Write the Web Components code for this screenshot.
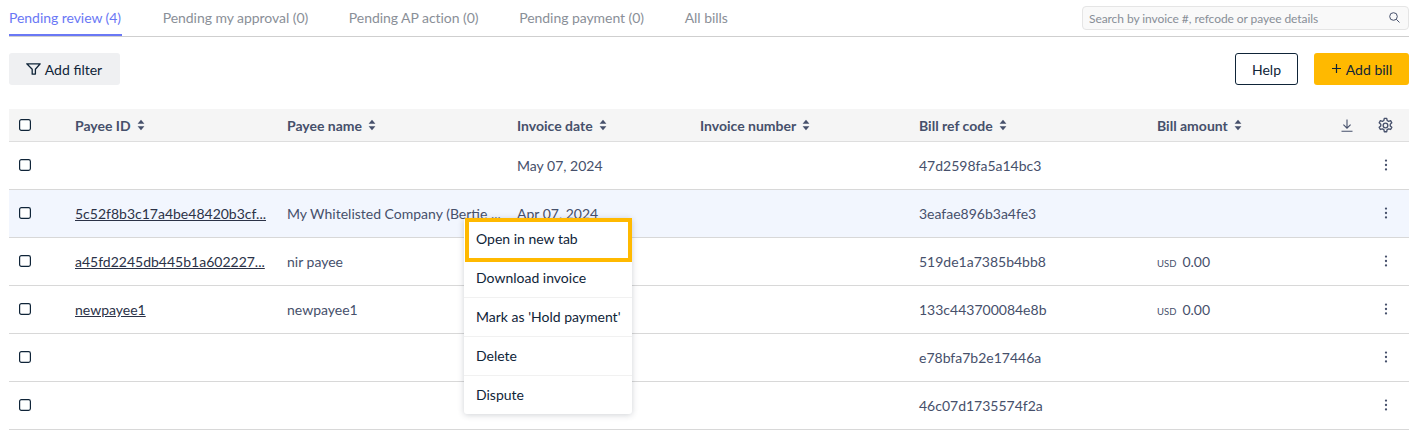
<!DOCTYPE html>
<html lang="en"><head><meta charset="utf-8"><title>Bills</title>
<style>
html,body{margin:0;padding:0;background:#fff}
body{font-family:Lato,"Liberation Sans",sans-serif;font-size:14px;color:#46506b;width:1424px;height:436px;overflow:hidden}
</style></head><body>
<bills-page>
  <bills-tabs slot="tabs">
    <tab-item active>Pending review (4)</tab-item>
    <tab-item>Pending my approval (0)</tab-item>
    <tab-item>Pending AP action (0)</tab-item>
    <tab-item>Pending payment (0)</tab-item>
    <tab-item>All bills</tab-item>
    <search-box slot="end" placeholder="Search by invoice #, refcode or payee details"></search-box>
  </bills-tabs>
  <bills-toolbar slot="toolbar">
    <app-button kind="soft" icon="filter">Add filter</app-button>
    <app-button slot="end" kind="outline">Help</app-button>
    <app-button slot="end" kind="primary" icon="plus">Add bill</app-button>
  </bills-toolbar>
  <bills-table slot="table">
    <header-row></header-row>
    <bill-row date="May 07, 2024" ref="47d2598fa5a14bc3"></bill-row>
    <bill-row hl payee="5c52f8b3c17a4be48420b3cf..." name="My Whitelisted Company (Bertie ..." date="Apr 07, 2024" ref="3eafae896b3a4fe3"></bill-row>
    <bill-row payee="a45fd2245db445b1a602227..." name="nir payee" ref="519de1a7385b4bb8" amount="0.00"></bill-row>
    <bill-row payee="newpayee1" name="newpayee1" ref="133c443700084e8b" amount="0.00"></bill-row>
    <bill-row ref="e78bfa7b2e17446a"></bill-row>
    <bill-row ref="46c07d1735574f2a"></bill-row>
  </bills-table>
  <action-menu slot="overlay">
    <menu-item focused>Open in new tab</menu-item>
    <menu-item>Download invoice</menu-item>
    <menu-item>Mark as 'Hold payment'</menu-item>
    <menu-item>Delete</menu-item>
    <menu-item last>Dispute</menu-item>
  </action-menu>
</bills-page>
<script>
const GRID='grid-template-columns:66px 212px 230px 183px 219px 238px 1fr 22px 46px;';
function def(name,html){
  customElements.define(name,class extends HTMLElement{
    connectedCallback(){
      if(this.shadowRoot)return;
      const r=this.attachShadow({mode:'open'});
      r.innerHTML=typeof html==='function'?html(this):html;
    }
  });
}
const attr=(e,n)=>{const v=e.getAttribute(n);return v==null?'':v};
const CHECK=`<svg width="12" height="12" viewBox="0 0 12 12" style="display:block"><rect x=".6" y=".6" width="10.8" height="10.8" rx="1.8" fill="#fff" stroke="#0f2438" stroke-width="1.2"/></svg>`;
const SORT=`<svg width="8" height="12" viewBox="0 0 8 12" style="display:block"><path d="M4 .8 7.4 4.800H.6z M4 11.200 .6 7.200h6.800z" fill="#46506b"/></svg>`;
const KEBAB=`<svg width="4" height="12" viewBox="0 0 4 12" style="display:block"><circle cx="2" cy="1.600" r="1.150" fill="#46506b"/><circle cx="2" cy="6" r="1.150" fill="#46506b"/><circle cx="2" cy="10.400" r="1.150" fill="#46506b"/></svg>`;

def('bills-page',`<style>:host{display:block;position:relative;width:1400px;padding:0 15px 0 9px;height:436px}
.ov{position:absolute;left:464px;top:218px}</style>
<slot name="tabs"></slot><slot name="toolbar"></slot><slot name="table"></slot><div class="ov"><slot name="overlay"></slot></div>`);

def('bills-tabs',`<style>:host{display:flex;height:36px;border-bottom:1px solid #cfcfcf;justify-content:space-between}
.t{display:flex;gap:40.7px}.e{padding-top:6px}</style><div class="t"><slot></slot></div><div class="e"><slot name="end"></slot></div>`);

def('tab-item',e=>`<style>:host{display:block;height:36px;box-sizing:border-box;padding-top:9px;line-height:18px;font-size:14px;white-space:nowrap;letter-spacing:-.05px;color:${e.hasAttribute('active')?'#6a78f5':'#8a8f98'};${e.hasAttribute('active')?'border-bottom:2px solid #6a78f5;min-width:113px;':''}}</style><slot></slot>`);

def('search-box',e=>`<style>:host{display:flex;align-items:center;justify-content:space-between;box-sizing:border-box;width:327px;height:24px;border:1px solid #e5e5e5;border-radius:4px;background:#f9f9f9;padding:0 8px 0 6px}
span{font-size:12px;letter-spacing:-.07px;color:#888e97;white-space:nowrap}svg{display:block;margin-top:-2px}</style>
<span>${attr(e,'placeholder')}</span>
<svg width="11" height="11" viewBox="0 0 11 11" fill="none" stroke="#46506b" stroke-width="1"><circle cx="4.500" cy="4.500" r="3.800"/><path d="M7.300 7.300l3.200 3.200"/></svg>`);

def('bills-toolbar',`<style>:host{display:flex;justify-content:space-between;padding-top:16px;height:32px}
.e{display:flex;gap:16px}</style><slot></slot><div class="e"><slot name="end"></slot></div>`);

const ICONS={
 filter:`<svg width="15" height="12" viewBox="0 0 15 12" fill="none" stroke="#0f2438" stroke-width="1.300" stroke-linejoin="round" style="display:block"><path d="M.8.8h13.400L9.400 6.200v4.900L6.200 11.200V6.200z"/></svg>`,
 plus:`<svg width="9" height="9" viewBox="0 0 9 9" fill="none" stroke="#0f2438" stroke-width="1.200" style="display:block;margin-top:-2px"><path d="M4.500 0v9M0 4.500h9"/></svg>`};
def('app-button',e=>{
 const k=attr(e,'kind'),ic=attr(e,'icon');
 const s={soft:'width:111px;background:#eff0f2;padding-right:1px;',outline:'width:63px;background:#fff;border:1px solid #0f2438;',primary:'width:95px;background:#ffb900;padding-left:1px;'}[k];
 return `<style>:host{display:flex;align-items:center;justify-content:center;gap:${k==='soft'?4:5}px;box-sizing:border-box;height:32px;border-radius:3px;font-size:14px;color:#0f2438;white-space:nowrap;${s}}</style>${ic?ICONS[ic]:''}<slot></slot>`;
});

def('bills-table',`<style>:host{display:block;margin-top:24px}</style><slot></slot>`);

const CELLS=`display:grid;${GRID}align-items:center;`;
def('header-row',()=>{
 const h=(t)=>`<div class="h">${t}${SORT}</div>`;
 return `<style>:host{${CELLS}height:33px;box-sizing:border-box;background:#f5f5f5;border-bottom:1px solid #dedede;font-weight:700;font-size:14px;color:#46506b}
.c{padding-left:10px}.h{display:flex;align-items:center;gap:6px;white-space:nowrap}
.i{display:flex;justify-content:center}</style>
<div class="c">${CHECK}</div>${h('Payee ID')}${h('Payee name')}${h('Invoice date')}${h('Invoice number')}${h('Bill ref code')}${h('Bill amount')}
<div class="i" style="justify-content:flex-start"><svg width="12" height="13" viewBox="0 0 12 13" fill="none" stroke="#46506b" stroke-width="1.100" style="display:block"><path d="M6 .5v8.500M2.400 5.600 6 9.200l3.600-3.600M.5 12.200h11"/></svg></div>
<div class="i" style="padding-right:1px"><svg width="17" height="17" viewBox="0 0 24 24" fill="none" stroke="#46506b" stroke-width="1.900" stroke-linejoin="round" style="display:block"><path d="M10.300 2h3.400l.6 2.900 2.100 1.200 2.800-.9 1.700 3-2.200 2v2.400l2.200 2-1.700 3-2.800-.9-2.100 1.200-.6 2.900h-3.400l-.6-2.900-2.100-1.200-2.800.9-1.700-3 2.200-2V10.200l-2.200-2 1.700-3 2.800.9 2.100-1.200z"/><circle cx="12" cy="12" r="3.300"/></svg></div>`;
});

def('bill-row',e=>{
 const p=attr(e,'payee'),amt=attr(e,'amount');
 return `<style>:host{${CELLS}height:48px;box-sizing:border-box;border-bottom:1px solid #d8d8d8;font-size:14px;color:#46506b;background:${e.hasAttribute('hl')?'#f2f6fe':'#fff'}}
.c{padding-left:10px;margin-top:-1px}div{white-space:nowrap}a{color:#2b3247;text-decoration:underline}
.u{font-size:9.5px;margin-right:6px}.k{display:flex;justify-content:center;margin-top:-1px}</style>
<div class="c">${CHECK}</div><div>${p?`<a>${p}</a>`:''}</div><div>${attr(e,'name')}</div><div>${attr(e,'date')}</div><div></div><div>${attr(e,'ref')}</div>
<div>${amt?`<span class="u">USD</span>${amt}`:''}</div><div></div><div class="k">${KEBAB}</div>`;
});

def('action-menu',`<style>:host{display:block;box-sizing:border-box;width:168px;height:196px;padding-top:2px;background:#fff;border-radius:3px;box-shadow:0 1px 6px rgba(40,50,70,.22)}</style><slot></slot>`);
def('menu-item',e=>{
 const f=e.hasAttribute('focused'),l=e.hasAttribute('last');
 const s=f?'height:36px;margin:2px 4px 1px 5px;padding-left:7px;padding-bottom:3px;outline:4px solid #ffb900;background:#fff;':
   l?'height:38px;padding-left:12px;padding-bottom:2px;':'height:39px;padding-left:12px;padding-bottom:2px;border-bottom:1px solid #f1f1f1;';
 return `<style>:host{display:flex;align-items:center;box-sizing:border-box;font-size:14px;color:#0f2438;white-space:nowrap;${s}}</style><slot></slot>`;
});
</script>
</body></html>
